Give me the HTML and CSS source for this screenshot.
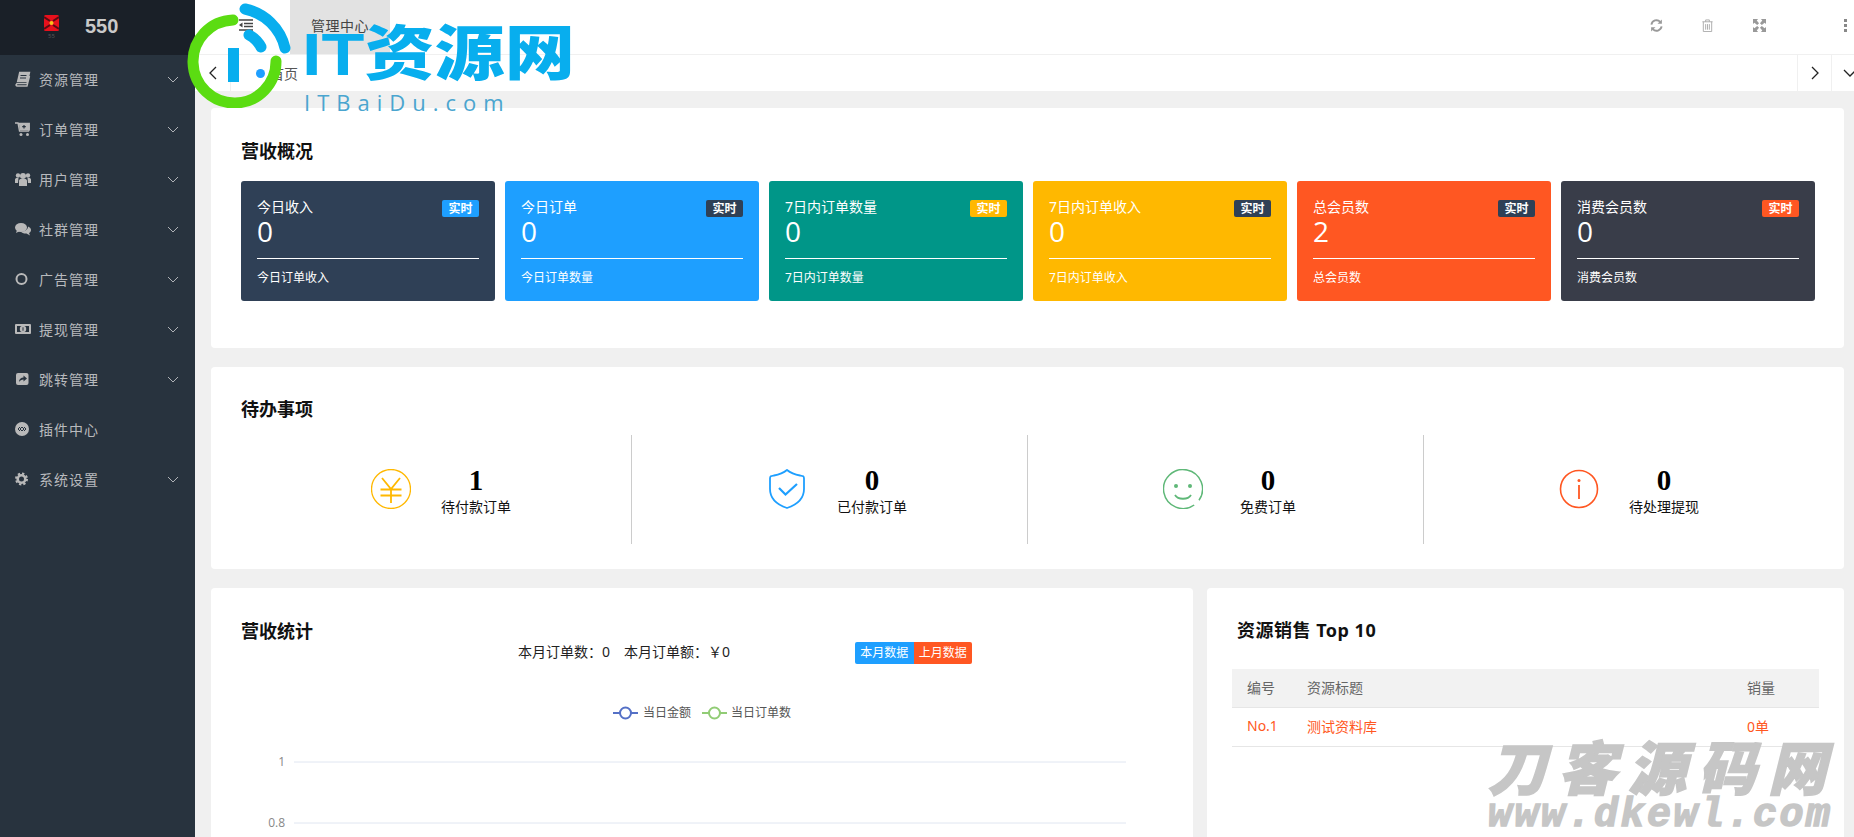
FILE: index.html
```html
<!DOCTYPE html>
<html lang="zh-CN">
<head>
<meta charset="utf-8">
<title>管理中心</title>
<link rel="stylesheet" href="styles.css">
</head>
<body>
<div class="app">
  <aside class="sidebar">
    <div class="brand">
      <div class="brand-mark">
        <svg class="brand-icon" viewBox="0 0 15 16"><rect width="15" height="16" rx="1.5" fill="#e8101c"/><path d="M0 2 L6 6 M15 2 L9 6 M0 14 L6 10 M15 14 L9 10" stroke="#5b0b12" stroke-width="2"/><circle cx="7.5" cy="8" r="2" fill="#f7c21a"/></svg>
        <span class="brand-sub">55</span>
      </div>
      <span class="brand-name">550</span>
    </div>
    <nav class="menu">
      <a class="menu-item"><svg class="mi" viewBox="0 0 16 16"><path d="M4 1.5h10.5l-2.5 11H2L1 14c.2 1 .8 1 1.5 1H12l2.5-10" fill="none" stroke="#b9b9b9" stroke-width="1.4"/><path d="M4 1.5h10.5L12.2 11H1.8z" fill="#b9b9b9"/><path d="M5.5 4.5h6M5 7h6" stroke="#28333e"/></svg><span class="ml">资源管理</span><svg class="chev" viewBox="0 0 12 7"><path d="M1 1l5 5 5-5" fill="none" stroke="#b0b3b7" stroke-width="1"/></svg></a>
      <a class="menu-item"><svg class="mi" viewBox="0 0 16 16"><path d="M0 2h3l1.500 8h9l.8-1.200V2.500H3.500" fill="none" stroke="#b9b9b9" stroke-width="1.300"/><path d="M4 3h10v6H4.500z" fill="#b9b9b9"/><path d="M9 4v3.500M7.200 5.700h3.600" stroke="#28333e" stroke-width="1.200"/><circle cx="6" cy="13.500" r="1.500" fill="#b9b9b9"/><circle cx="12.500" cy="13.500" r="1.500" fill="#b9b9b9"/></svg><span class="ml">订单管理</span><svg class="chev" viewBox="0 0 12 7"><path d="M1 1l5 5 5-5" fill="none" stroke="#b0b3b7" stroke-width="1"/></svg></a>
      <a class="menu-item"><svg class="mi" viewBox="0 0 16 16"><circle cx="3" cy="4.500" r="2.200" fill="#b9b9b9"/><circle cx="13" cy="4.500" r="2.200" fill="#b9b9b9"/><circle cx="8" cy="5" r="3" fill="#b9b9b9"/><path d="M0 12V8.500c0-1 1-1.500 2-1.500h1.500L3 12zM16 12V8.500c0-1-1-1.500-2-1.500h-1.500l.5 5zM4 15V10c0-1.500 1-2 2-2h4c1 0 2 .5 2 2v5z" fill="#b9b9b9"/></svg><span class="ml">用户管理</span><svg class="chev" viewBox="0 0 12 7"><path d="M1 1l5 5 5-5" fill="none" stroke="#b0b3b7" stroke-width="1"/></svg></a>
      <a class="menu-item"><svg class="mi" viewBox="0 0 16 16"><ellipse cx="6" cy="6.500" rx="6" ry="4.500" fill="#b9b9b9"/><path d="M2 9l-1 3 4-2z" fill="#b9b9b9"/><path d="M13 5.500c2 .8 3 2 3 3.500 0 1.300-.7 2.300-2 3l1 2.500-3.500-2c-2.500.2-4.500-.5-5.500-1.800 3.500 0 7-2 7-5.200z" fill="#b9b9b9"/></svg><span class="ml">社群管理</span><svg class="chev" viewBox="0 0 12 7"><path d="M1 1l5 5 5-5" fill="none" stroke="#b0b3b7" stroke-width="1"/></svg></a>
      <a class="menu-item"><svg class="mi" viewBox="0 0 16 16"><circle cx="6.500" cy="8" r="5" fill="none" stroke="#b9b9b9" stroke-width="2"/></svg><span class="ml">广告管理</span><svg class="chev" viewBox="0 0 12 7"><path d="M1 1l5 5 5-5" fill="none" stroke="#b0b3b7" stroke-width="1"/></svg></a>
      <a class="menu-item"><svg class="mi" viewBox="0 0 16 16"><rect y="3" width="16" height="10" rx="1" fill="#b9b9b9"/><rect x="2" y="5" width="12" height="6" fill="#28333e"/><circle cx="8" cy="8" r="3.200" fill="#b9b9b9"/><path d="M8 6.300v3.400" stroke="#28333e" stroke-width="1"/></svg><span class="ml">提现管理</span><svg class="chev" viewBox="0 0 12 7"><path d="M1 1l5 5 5-5" fill="none" stroke="#b0b3b7" stroke-width="1"/></svg></a>
      <a class="menu-item"><svg class="mi" viewBox="0 0 16 16"><rect x="1" y="2" width="12.500" height="12" rx="2" fill="#b9b9b9"/><path d="M4 11c0-3 2-4.500 4.500-4.500V4.500L12 7.500l-3.500 3V8.500C6.500 8.500 5 9.500 4 11z" fill="#28333e"/></svg><span class="ml">跳转管理</span><svg class="chev" viewBox="0 0 12 7"><path d="M1 1l5 5 5-5" fill="none" stroke="#b0b3b7" stroke-width="1"/></svg></a>
      <a class="menu-item"><svg class="mi" viewBox="0 0 16 16"><circle cx="7" cy="8" r="7" fill="#b9b9b9"/><path d="M5 6l-2 2 2 2M9 6l2 2-2 2M7 6L5 8l2 2M7 6l2 2-2 2" fill="none" stroke="#28333e" stroke-width="1"/></svg><span class="ml">插件中心</span></a>
      <a class="menu-item"><svg class="mi" viewBox="0 0 16 16"><circle cx="6.500" cy="8" r="3.800" fill="none" stroke="#b9b9b9" stroke-width="2.600"/><circle cx="6.500" cy="8" r="5.500" fill="none" stroke="#b9b9b9" stroke-width="2" stroke-dasharray="2.300 2"/></svg><span class="ml">系统设置</span><svg class="chev" viewBox="0 0 12 7"><path d="M1 1l5 5 5-5" fill="none" stroke="#b0b3b7" stroke-width="1"/></svg></a>
    </nav>
  </aside>

  <main class="main">
    <header class="topbar">
      <svg class="hamburger" viewBox="0 0 14 12"><path d="M0 1h14M5 4.500h9M5 7.500h9M0 11h14" stroke="#444" stroke-width="1.500"/><path d="M3.500 3.500L0 6l3.500 2.500z" fill="#444"/></svg>
      <div class="top-tab">管理中心</div>
      <div class="tools">
        <span class="tool"><svg viewBox="0 0 14 14"><path d="M1.500 6A5.600 5.600 0 0 1 11 3" fill="none" stroke="#999" stroke-width="2"/><path d="M12.800.500v4.700H8.100z" fill="#999"/><path d="M12.500 8A5.600 5.600 0 0 1 3 11" fill="none" stroke="#999" stroke-width="2"/><path d="M1.200 13.500V8.800h4.700z" fill="#999"/></svg></span>
        <span class="tool"><svg viewBox="0 0 12 14"><path d="M.500 3h11M4 3V1h4v2M1.500 3v10.500h9V3M4 5.500v6M6 5.500v6M8 5.500v6" fill="none" stroke="#aaa" stroke-width="1"/></svg></span>
        <span class="tool"><svg viewBox="0 0 14 14"><path d="M0 0h5.500L4 1.500 6.500 4.500 4.500 6.500 1.500 4 0 5.500zM14 0v5.500L12.500 4 9.500 6.500 7.500 4.500 10 1.500 8.500 0zM0 14V8.500L1.500 10l3-2.500 2 2L4 12.500 5.500 14zM14 14H8.500l1.500-1.500-2.500-3 2-2 3 2.500L14 8.500z" fill="#999"/></svg></span>
        <span class="tool dots"><i></i><i></i><i></i></span>
      </div>
    </header>
    <div class="tabrow">
      <button class="tb-btn"><svg viewBox="0 0 8 14"><path d="M7 1L1 7l6 6" fill="none" stroke="#222" stroke-width="1.300"/></svg></button>
      <div class="home-tab"><i class="dot"></i>首页</div>
      <button class="tb-btn tb-right"><svg viewBox="0 0 8 14"><path d="M1 1l6 6-6 6" fill="none" stroke="#222" stroke-width="1.300"/></svg></button>
      <button class="tb-btn tb-last"><svg class="wide" viewBox="0 0 14 8"><path d="M1 1l6 6 6-6" fill="none" stroke="#222" stroke-width="1.300"/></svg></button>
    </div>

    <div class="content">
      <section class="card overview">
        <h2 class="card-title">营收概况</h2>
        <div class="stats">
          <div class="stat navy"><div class="stat-head"><span>今日收入</span><em class="badge b-blue">实时</em></div><div class="stat-num">0</div><div class="stat-foot">今日订单收入</div></div>
          <div class="stat blue"><div class="stat-head"><span>今日订单</span><em class="badge b-navy">实时</em></div><div class="stat-num">0</div><div class="stat-foot">今日订单数量</div></div>
          <div class="stat green"><div class="stat-head"><span>7日内订单数量</span><em class="badge b-yellow">实时</em></div><div class="stat-num">0</div><div class="stat-foot">7日内订单数量</div></div>
          <div class="stat yellow"><div class="stat-head"><span>7日内订单收入</span><em class="badge b-navy">实时</em></div><div class="stat-num">0</div><div class="stat-foot">7日内订单收入</div></div>
          <div class="stat orange"><div class="stat-head"><span>总会员数</span><em class="badge b-navy">实时</em></div><div class="stat-num">2</div><div class="stat-foot">总会员数</div></div>
          <div class="stat slate"><div class="stat-head"><span>消费会员数</span><em class="badge b-orange">实时</em></div><div class="stat-num">0</div><div class="stat-foot">消费会员数</div></div>
        </div>
      </section>

      <section class="card todo">
        <h2 class="card-title">待办事项</h2>
        <div class="todo-grid">
          <div class="todo-col">
            <svg class="todo-icon" viewBox="0 0 40 40"><ellipse cx="20" cy="20" rx="19.500" ry="19.500" fill="none" stroke="#ffb800" stroke-width="1.300"/><path d="M11 9l9 11 9-11M9.500 20.500h21M9.500 26.500h21M20 20v14" fill="none" stroke="#ffb800" stroke-width="1.800"/></svg>
            <div class="todo-text"><div class="todo-num">1</div><div class="todo-label">待付款订单</div></div>
          </div>
          <div class="todo-col">
            <svg class="todo-icon" viewBox="0 0 40 40"><path d="M20 1c3 2.500 7 4.500 13 5.500 3 .5 4 .5 4 3V20c0 10-8 16-17 19C11 36 3 30 3 20V9.500c0-2.500 1-2.500 4-3C13 5.500 17 3.500 20 1z" fill="none" stroke="#1e9fff" stroke-width="1.800"/><path d="M12 19l6.500 6.500L30 15" fill="none" stroke="#1e9fff" stroke-width="2.200"/></svg>
            <div class="todo-text"><div class="todo-num">0</div><div class="todo-label">已付款订单</div></div>
          </div>
          <div class="todo-col">
            <svg class="todo-icon" viewBox="0 0 40 40"><path d="M36 31.200A19.500 19.500 0 1 0 31.200 36" fill="none" stroke="#5fb878" stroke-width="1.500"/><circle cx="13" cy="17" r="2" fill="#5fb878"/><circle cx="27" cy="17" r="2" fill="#5fb878"/><path d="M12 26c3 5 13 5 16 0" fill="none" stroke="#5fb878" stroke-width="1.800"/></svg>
            <div class="todo-text"><div class="todo-num">0</div><div class="todo-label">免费订单</div></div>
          </div>
          <div class="todo-col">
            <svg class="todo-icon" viewBox="0 0 40 40"><circle cx="20" cy="20" r="18.500" fill="none" stroke="#ff5722" stroke-width="1.600"/><circle cx="20" cy="11.500" r="1.500" fill="#ff5722"/><path d="M20 16v14" stroke="#ff5722" stroke-width="1.800"/></svg>
            <div class="todo-text"><div class="todo-num">0</div><div class="todo-label">待处理提现</div></div>
          </div>
        </div>
      </section>

      <div class="bottom">
        <section class="card chart-card">
          <h2 class="card-title">营收统计</h2>
          <div class="chart-bar">
            <div class="chart-sum"><span>本月订单数：0</span><span>本月订单额：￥0</span></div>
            <div class="btns"><span class="btn btn-blue">本月数据</span><span class="btn btn-orange">上月数据</span></div>
          </div>
          <svg class="chart" viewBox="0 0 982 200">
            <path d="M402 49h25" stroke="#5470c6" stroke-width="2"/><circle cx="414.500" cy="49" r="5.500" fill="#fff" stroke="#5470c6" stroke-width="2"/>
            <text class="legend" x="432" y="53">当日金额</text>
            <path d="M491 49h25" stroke="#91cc75" stroke-width="2"/><circle cx="503.500" cy="49" r="5.500" fill="#fff" stroke="#91cc75" stroke-width="2"/>
            <text class="legend" x="520" y="53">当日订单数</text>
            <path d="M83 98h832M83 159h832" stroke="#e0e6f1"/>
            <text class="axis" x="74" y="102" text-anchor="end">1</text>
            <text class="axis" x="74" y="163" text-anchor="end">0.8</text>
          </svg>
        </section>
        <section class="card top-card">
          <h2 class="card-title">资源销售 Top 10</h2>
          <table class="rank">
            <thead><tr><th class="c1">编号</th><th>资源标题</th><th class="c3">销量</th></tr></thead>
            <tbody><tr><td>No.1</td><td>测试资料库</td><td>0单</td></tr></tbody>
          </table>
        </section>
      </div>
    </div>
  </main>
</div>

<div class="wm-logo">
  <svg class="wm-ring" viewBox="0 0 110 110">
    <path d="M46 22A41.500 41.500 0 1 0 89 63" fill="none" stroke="#5bdc12" stroke-width="11" stroke-linecap="round"/>
    <path d="M58 11A52 52 0 0 1 98 50" fill="none" stroke="#08aeee" stroke-width="11" stroke-linecap="round"/>
    <path d="M62 37A30 30 0 0 1 74 49" fill="none" stroke="#08aeee" stroke-width="11" stroke-linecap="round"/>
    <rect x="41" y="50" width="11" height="34" fill="#08aeee"/>
  </svg>
  <div class="wm-title">IT资源网</div>
  <div class="wm-sub">ITBaiDu.com</div>
</div>
<div class="wm-corner">
  <div class="wc-cn">刀客源码网</div>
  <div class="wc-en">www.dkewl.com</div>
</div>
</body>
</html>
```

FILE: styles.css
```css
* { box-sizing: border-box; }
html, body { margin: 0; height: 837px; overflow: hidden; background: #f0f0f0; }
body { font-family: "Noto Sans", "Noto Sans CJK SC", sans-serif; font-size: 14px; color: #333; position: relative; }
.app { display: flex; height: 837px; }

.sidebar { width: 195px; flex: none; background: #28333e; }
.brand { height: 55px; background: #1a2028; display: flex; align-items: flex-start; padding: 15px 0 0 44px; }
.brand-mark { width: 15px; display: flex; flex-direction: column; align-items: center; }
.brand-icon { width: 15px; height: 16px; }
.brand-sub { font-size: 6px; line-height: 8px; color: #555; margin-top: 1px; }
.brand-name { font-family: "Liberation Sans", sans-serif; font-weight: 700; font-size: 20px; line-height: 23px; color: #c9c9c9; margin-left: 26px; }
.menu { display: flex; flex-direction: column; }
.menu-item { height: 50px; display: flex; align-items: center; padding: 0 0 2px 15px; color: #b8babd; }
.mi { width: 16px; height: 16px; flex: none; }
.ml { margin-left: 8px; font-size: 14px; letter-spacing: 1px; white-space: nowrap; }
.chev { width: 12px; height: 7px; margin-left: 68px; }

.main { flex: 1; min-width: 0; overflow: hidden; display: flex; flex-direction: column; }
.topbar { height: 55px; flex: none; background: #fff; border-bottom: 1px solid #f0f0f0; display: flex; align-items: center; padding: 0 0 4px 44px; }
.hamburger { width: 14px; height: 12px; flex: none; }
.top-tab { width: 100px; height: 54px; margin-left: 37px; padding-bottom: 4px; background: #e2e2e2; display: flex; align-items: center; justify-content: center; color: #444; letter-spacing: .5px; align-self: flex-start; }
.tools { margin-left: auto; display: flex; align-items: center; }
.tool { width: 51.500px; display: flex; justify-content: center; }
.tool svg { width: 13px; height: 13px; }
.dots { width: 69px; flex-direction: column; align-items: flex-end; padding-right: 7px; gap: 2px; }
.dots i { width: 3px; height: 3px; background: #888; display: block; }

.tabrow { height: 36px; flex: none; background: #fff; display: flex; align-items: stretch; }
.tb-btn { width: 36px; padding: 0; border: 0; background: #fff; border-right: 1px solid #f0f0f0; display: flex; align-items: center; justify-content: center; flex: none; }
.tb-btn svg { width: 8px; height: 14px; }
.tb-btn svg.wide { width: 14px; height: 8px; }
.home-tab { display: flex; align-items: center; padding-left: 25px; gap: 5px; color: #555; }
.dot { width: 9px; height: 9px; border-radius: 50%; background: #1e9fff; display: block; }
.tb-right { margin-left: auto; width: 35px; border-left: 1px solid #f0f0f0; }
.tb-last { width: 35px; margin-right: -13px; border-right: 0; }

.content { flex: 1; padding: 17px 10px 0 16px; display: flex; flex-direction: column; gap: 19px; }
.card { background: #fff; border-radius: 4px; }
.card-title { margin: 0; font-size: 18px; line-height: 26px; font-weight: 700; color: #111; }
.overview { padding: 30px 29px 47px 30px; }
.overview .card-title { margin-bottom: 17px; }
.stats { display: grid; grid-template-columns: repeat(6, 254px); gap: 10px; }
.stat { height: 120px; border-radius: 3px; padding: 19px 16px 0; color: #fff; }
.navy { background: #2f4056; }
.blue { background: #1e9fff; }
.green { background: #009688; }
.yellow { background: #ffb800; }
.orange { background: #ff5722; }
.slate { background: #393d49; }
.stat-head { display: flex; justify-content: space-between; align-items: center; height: 17px; font-size: 14px; line-height: 17px; }
.stat-head span { padding-bottom: 4px; }
.badge { font-style: normal; font-size: 12px; font-weight: 700; line-height: 17px; width: 37px; text-align: center; border-radius: 2px; color: #fff; }
.b-blue { background: #1e9fff; }
.b-navy { background: #2f4056; }
.b-yellow { background: #ffb800; }
.b-orange { background: #ff5722; }
.stat-num { font-family: "Open Sans", sans-serif; font-size: 28px; line-height: 29px; height: 42px; border-bottom: 1px solid #fff; }
.stat-foot { font-size: 12px; line-height: 38px; }

.todo { padding: 29px 0 25px; }
.todo .card-title { padding-left: 30px; margin-bottom: 13px; }
.todo-grid { display: grid; grid-template-columns: repeat(4, 396px); margin-left: 25px; }
.todo-col { height: 109px; padding: 27px 0 0 135px; display: flex; align-items: flex-start; border-right: 1px solid #ccc; }
.todo-col:last-child { border-right: 0; }
.todo-icon { width: 40px; height: 40px; flex: none; margin-top: 7px; }
.todo-text { width: 100px; margin-left: 15px; text-align: center; color: #111; }
.todo-num { font-family: "Liberation Serif", serif; font-weight: 700; font-size: 29px; line-height: 36px; color: #000; }
.todo-label { font-size: 14px; line-height: 18px; }

.bottom { display: grid; grid-template-columns: 982px 637px; gap: 14px; }
.chart-card { padding: 30px 0 0 30px; height: 300px; }
.chart-bar { display: flex; align-items: center; height: 22px; margin-top: -2px; padding-left: 277px; }
.chart-sum { width: 337px; display: flex; gap: 14px; padding-bottom: 4px; font-size: 14px; color: #222; white-space: nowrap; }
.btns { display: flex; }
.btn { width: 58.500px; height: 22px; font-size: 12px; line-height: 22px; text-align: center; color: #fff; }
.btn-blue { background: #1e9fff; border-radius: 2px 0 0 2px; }
.btn-orange { background: #ff5722; border-radius: 0 2px 2px 0; }
.chart { display: block; width: 982px; height: 200px; margin-left: -30px; }
.legend { font-size: 12px; fill: #555; }
.axis { font-size: 12px; fill: #888; font-family: "Open Sans", sans-serif; }

.top-card { padding: 30px 25px 0; height: 300px; }
.top-card .card-title { padding-left: 5px; margin-top: -1px; margin-bottom: 26px; letter-spacing: .5px; }
.rank { width: 587px; border-collapse: collapse; table-layout: fixed; }
.rank th, .rank td { height: 39px; padding: 0 0 2px 15px; text-align: left; font-weight: 400; font-size: 14px; border-bottom: 1px solid #e6e6e6; }
.rank th { height: 38px; background: #f2f2f2; color: #666; }
.rank td { color: #ff5722; }
.c1 { width: 60px; }
.c3 { width: 87px; }

.wm-logo { position: absolute; left: 0; top: 0; width: 600px; height: 120px; pointer-events: none; }
.wm-ring { position: absolute; left: 187px; top: -2px; width: 110px; height: 110px; }
.wm-title { position: absolute; left: 302px; top: 15px; font-family: "Liberation Sans", "Noto Sans CJK SC", sans-serif; font-weight: 900; font-size: 60px; line-height: 80px; color: #08aeee; white-space: nowrap; transform: scaleX(1.17); transform-origin: left center; }
.wm-sub { position: absolute; left: 304px; top: 91px; font-family: "Open Sans", sans-serif; font-size: 22px; line-height: 22px; letter-spacing: 7px; color: #4aa5cf; white-space: nowrap; }
.wm-corner { position: absolute; left: 1488px; top: 731px; width: 360px; color: #c6c6c6; font-style: italic; font-weight: 900; white-space: nowrap; pointer-events: none; }
.wc-cn { font-family: "Noto Sans CJK SC", sans-serif; font-size: 58px; line-height: 68px; letter-spacing: 12px; -webkit-text-stroke: 1.500px #c6c6c6; }
.wc-en { font-family: "Liberation Mono", monospace; font-weight: 700; font-size: 40px; line-height: 34px; letter-spacing: 2.500px; -webkit-text-stroke: 1.500px #c6c6c6; }
```
